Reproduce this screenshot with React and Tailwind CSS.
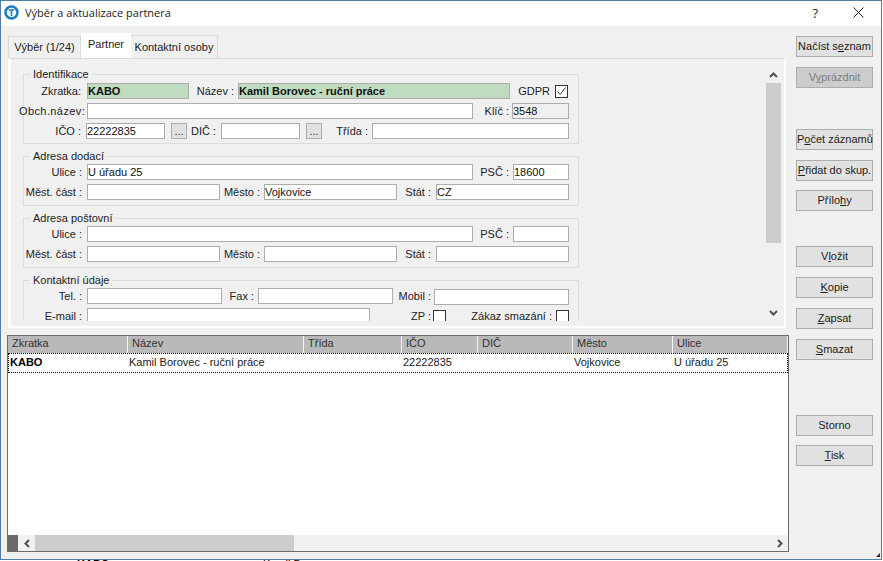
import React from "react";

const Label = ({ w, pr = 5, className = "", children }) => (
  <div className={"shrink-0 text-right whitespace-nowrap text-[#222] " + className} style={{ width: w, paddingRight: pr }}>
    {children}
  </div>
);

const Input = ({ w, value, green, gray, className = "" }) => (
  <div
    className={
      "shrink-0 h-[16px] border border-[#adadad] leading-[14px] whitespace-nowrap overflow-hidden text-[#111] " +
      (green ? "bg-[#c0dcc0] font-bold " : gray ? "bg-[#f0f0f0] " : "bg-white ") +
      className
    }
    style={{ width: w }}
  >
    {value}
  </div>
);

const Dots = () => (
  <div className="shrink-0 ml-[6px] w-[16px] h-[16px] border border-[#adadad] bg-[#e1e1e1] text-center leading-[15px] text-[#333]">...</div>
);

const Check = ({ checked }) => (
  <div className="shrink-0 w-[13px] h-[13px] border border-[#333] bg-white">
    {checked && (
      <svg width="11" height="11" viewBox="0 0 11 11" fill="none" stroke="#333" strokeWidth="1">
        <path d="M1.5 5.5 L4.2 8.5 L9.5 1.5" />
      </svg>
    )}
  </div>
);

const Row = ({ children, first }) => (
  <div className={"flex items-center h-[16px] " + (first ? "" : "mt-[4px]")}>{children}</div>
);

const Group = ({ title, pt, pb, className = "", children }) => (
  <div className={"relative w-[556px] border border-[#dcdcdc] " + className} style={{ paddingTop: pt, paddingBottom: pb }}>
    <div className="absolute left-[6px] top-[-8px] bg-[#f0f0f0] px-[3px] leading-[14px] text-[#222]">{title}</div>
    {children}
  </div>
);

const Btn = ({ mt, disabled, children }) => (
  <div
    className={
      "w-[77px] h-[21px] border border-[#adadad] text-center leading-[18px] whitespace-nowrap " +
      (disabled ? "bg-[#cccccc] text-[#7d7d7d]" : "bg-[#e1e1e1] text-[#222]")
    }
    style={{ marginTop: mt }}
  >
    {children}
  </div>
);

const Chevron = ({ d, w = 9, h = 6 }) => (
  <svg width={w} height={h} viewBox={`0 0 ${w} ${h}`} fill="none" stroke="#505050" strokeWidth="2">
    <path d={d} />
  </svg>
);

const columns = [
  { name: "Zkratka", w: 120, cw: 119, cell: "KABO", bold: true },
  { name: "Název", w: 176, cw: 176, cell: "Kamil Borovec - ruční práce" },
  { name: "Třída", w: 98, cw: 98, cell: "" },
  { name: "IČO", w: 76, cw: 76, cell: "22222835" },
  { name: "DIČ", w: 95, cw: 95, cell: "" },
  { name: "Město", w: 100, cw: 100, cell: "Vojkovice" },
  { name: "Ulice", w: 115, cw: 113, cell: "U úřadu 25" },
];

export default function App() {
  return (
    <div className="relative w-[883px] h-[561px] overflow-hidden bg-white text-[11px] leading-[14px] font-['Liberation_Sans',Arial,sans-serif]">
      <div className="relative flex flex-col w-[882px] h-[560px] border border-[#4f7da6] bg-[#f0f0f0]">
        {/* title bar */}
        <div className="flex items-center h-[25px] shrink-0 bg-white pb-[2px]">
          <svg className="ml-[3px] shrink-0" width="15" height="15" viewBox="0 0 15 15">
            <circle cx="7.5" cy="7.5" r="6" fill="#fff" stroke="#1b80bd" strokeWidth="2.6" />
            <path d="M4.6 5 H10.4 M7.5 5 V11" stroke="#1b80bd" strokeWidth="1.6" fill="none" />
          </svg>
          <div className="ml-[6px] text-[#222] text-[11px] font-['Open_Sans',sans-serif]">Výběr a aktualizace partnera</div>
          <div className="ml-auto mr-[35px] text-[13px] text-[#222] font-['Open_Sans',sans-serif]">?</div>
          <svg className="mr-[17px]" width="11" height="11" viewBox="0 0 11 11" stroke="#222" strokeWidth="1">
            <path d="M0.5 0.5 L10.5 10.5 M10.5 0.5 L0.5 10.5" />
          </svg>
        </div>

        <div className="flex flex-1 min-h-0">
          {/* left side */}
          <div className="flex flex-col w-[782px] ml-[6px] pt-[7px]">
            {/* tabs */}
            <div className="flex items-end h-[25px] ml-px text-[#222] whitespace-nowrap">
              <div className="w-[73px] h-[22px] border border-b-0 border-[#d9d9d9] text-center leading-[21px]">Výběr (1/24)</div>
              <div className="w-[50px] h-[25px] bg-white text-center leading-[22px]">Partner</div>
              <div className="w-[87px] h-[23px] border border-l-0 border-b-0 border-[#d9d9d9] text-center leading-[22px]">Kontaktní osoby</div>
            </div>

            {/* form panel */}
            <div className="flex w-[778px] h-[270px] ml-px border-t border-t-[#d9d9d9] border-l-[3px] border-r-2 border-b-2 border-l-white border-r-white border-b-white pt-[7px] pb-[5px]">
              <div className="w-[755px] overflow-hidden pl-[12px] pt-[8px]">
                <Group title="Identifikace" pt={8} pb={4}>
                  <Row first>
                    <Label w={63} pr={6}>Zkratka:</Label>
                    <Input w={102} value="KABO" green />
                    <Label w={49} pr={4}>Název :</Label>
                    <Input w={272} value="Kamil Borovec - ruční práce" green />
                    <Label w={45}>GDPR</Label>
                    <Check checked />
                  </Row>
                  <Row>
                    <Label w={68} pr={6} className="-ml-[5px] tracking-[0.4px]">Obch.název:</Label>
                    <Input w={386} />
                    <Label w={39} pr={3}>Klíč :</Label>
                    <Input w={57} value="3548" gray />
                  </Row>
                  <Row>
                    <Label w={62}>IČO :</Label>
                    <Input w={79} value="22222835" />
                    <Dots />
                    <Label w={34}>DIČ :</Label>
                    <Input w={79} />
                    <Dots />
                    <Label w={50} pr={4}>Třída :</Label>
                    <Input w={197} />
                  </Row>
                </Group>

                <Group title="Adresa dodací" pt={7} pb={5} className="mt-[12px]">
                  <Row first>
                    <Label w={63}>Ulice :</Label>
                    <Input w={386} value="U úřadu 25" />
                    <Label w={40} pr={4}>PSČ :</Label>
                    <Input w={56} value="18600" />
                  </Row>
                  <Row>
                    <Label w={63}>Měst. část :</Label>
                    <Input w={133} />
                    <Label w={44} pr={4}>Město :</Label>
                    <Input w={133} value="Vojkovice" />
                    <Label w={39}>Stát :</Label>
                    <Input w={133} value="CZ" />
                  </Row>
                </Group>

                <Group title="Adresa poštovní" pt={7} pb={5} className="mt-[12px]">
                  <Row first>
                    <Label w={63}>Ulice :</Label>
                    <Input w={386} />
                    <Label w={40} pr={4}>PSČ :</Label>
                    <Input w={56} />
                  </Row>
                  <Row>
                    <Label w={63}>Měst. část :</Label>
                    <Input w={133} />
                    <Label w={44} pr={4}>Město :</Label>
                    <Input w={133} />
                    <Label w={39}>Stát :</Label>
                    <Input w={133} />
                  </Row>
                </Group>

                <Group title="Kontaktní údaje" pt={7} pb={5} className="mt-[12px]">
                  <Row first>
                    <Label w={63}>Tel. :</Label>
                    <Input w={135} />
                    <Label w={36} pr={4}>Fax :</Label>
                    <Input w={135} />
                    <Label w={41} pr={3}>Mobil :</Label>
                    <Input w={135} className="mt-[2px]" />
                  </Row>
                  <Row>
                    <Label w={63}>E-mail :</Label>
                    <Input w={283} />
                    <Label w={63} pr={2}>ZP :</Label>
                    <Check />
                    <Label w={110} pr={4}>Zákaz smazání :</Label>
                    <Check />
                  </Row>
                </Group>
              </div>

              {/* vertical scrollbar */}
              <div className="flex flex-col items-center w-[15px] shrink-0">
                <div className="flex items-center justify-center h-[17px] shrink-0">
                  <Chevron d="M1 5 L4.5 1.5 L8 5" />
                </div>
                <div className="w-full h-[160px] shrink-0 bg-[#cdcdcd]" />
                <div className="flex-1" />
                <div className="flex items-center justify-center h-[17px] shrink-0">
                  <Chevron d="M1 1 L4.5 4.5 L8 1" />
                </div>
              </div>
            </div>

            {/* grid */}
            <div className="flex flex-col w-[782px] h-[217px] mt-[7px] border border-[#6b6b6b] bg-white text-[#222]">
              <div className="flex h-[17px] shrink-0 bg-[#b9b9b9]">
                {columns.map((c) => (
                  <div key={c.name} className="shrink-0 border-r border-r-[#f4f4f4] pl-[4px] leading-[15px] text-[#333]" style={{ width: c.w }}>
                    {c.name}
                  </div>
                ))}
              </div>
              <div className="flex h-[20px] shrink-0 border border-dotted border-black leading-[17px]">
                {columns.map((c) => (
                  <div key={c.name} className={"shrink-0 pl-px whitespace-nowrap " + (c.bold ? "font-bold text-black" : "")} style={{ width: c.cw }}>
                    {c.cell}
                  </div>
                ))}
              </div>
              <div className="flex-1" />
              {/* horizontal scrollbar */}
              <div className="flex h-[16px] shrink-0 bg-[#f0f0f0]">
                <div className="w-[10px] bg-[#6a6a6a]" />
                <div className="flex items-center justify-center w-[17px]">
                  <Chevron w={6} h={9} d="M5 1 L1.5 4.5 L5 8" />
                </div>
                <div className="w-[259px] bg-[#cdcdcd]" />
                <div className="flex-1" />
                <div className="flex items-center justify-center w-[17px]">
                  <Chevron w={6} h={9} d="M1 1 L4.5 4.5 L1 8" />
                </div>
              </div>
            </div>
          </div>

          {/* buttons */}
          <div className="flex flex-col ml-[7px] pt-[10px]">
            <Btn mt={0}>Načíst s<u>e</u>znam</Btn>
            <Btn mt={10} disabled>V<u>y</u>prázdnit</Btn>
            <Btn mt={41}>P<u>o</u>čet záznamů</Btn>
            <Btn mt={10}><u>P</u>řidat do skup.</Btn>
            <Btn mt={9}>Přílo<u>h</u>y</Btn>
            <Btn mt={35}>V<u>l</u>ožit</Btn>
            <Btn mt={10}><u>K</u>opie</Btn>
            <Btn mt={10}><u>Z</u>apsat</Btn>
            <Btn mt={10}><u>S</u>mazat</Btn>
            <Btn mt={55}>Storno</Btn>
            <Btn mt={9}><u>T</u>isk</Btn>
          </div>
        </div>

        <svg className="absolute right-[1px] bottom-[2px]" width="4" height="4" viewBox="0 0 4 4">
          <path d="M4 0 V4 H0 Z" fill="#4a1f2a" />
        </svg>
      </div>
      {/* window behind the dialog, only its top edge shows */}
      <div className="flex h-px overflow-hidden leading-[8px] text-black whitespace-nowrap">
        <div className="ml-[77px] w-[186px] font-bold">KABO</div>
        <div>Kamil Borovec</div>
      </div>
    </div>
  );
}
